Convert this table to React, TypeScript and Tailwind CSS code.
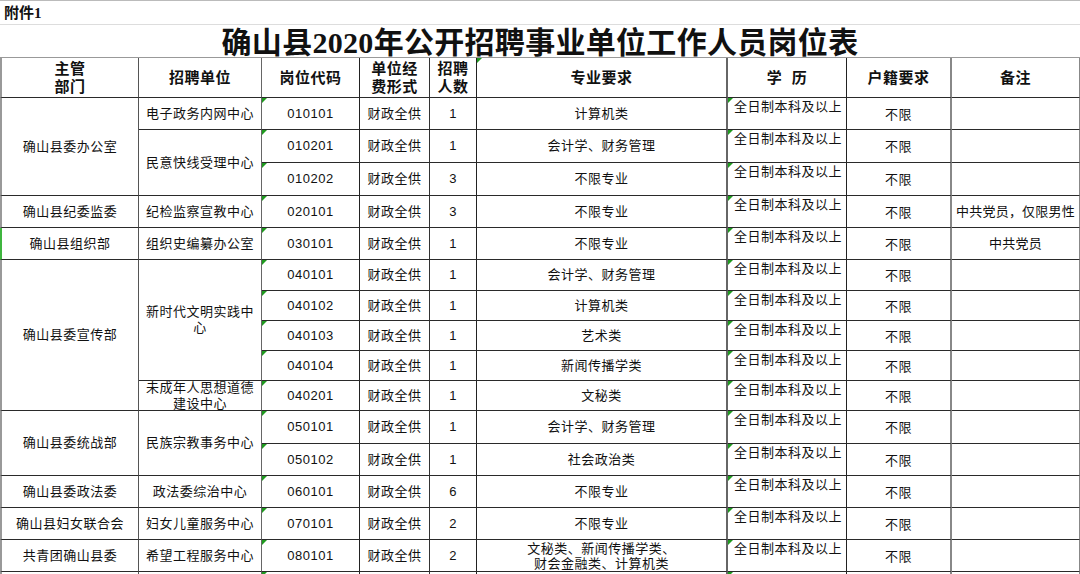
import React from 'react';

const FONT = '"Liberation Sans", "Noto Sans CJK SC", sans-serif';
const TITLE_FONT = '"Liberation Serif", "Noto Sans CJK SC", serif';

// right border + grid column per column
const COL = [
  'col-start-1 border-r border-r-[#555] border-l-2 border-l-[#999]',
  'col-start-2 border-r border-r-[#666]',
  'col-start-3 border-r border-r-[#222]',
  'col-start-4 border-r border-r-[#333]',
  'col-start-5 border-r border-r-[#222]',
  'col-start-6 border-r-2 border-r-[#666]',
  'col-start-7 border-r border-r-[#222]',
  'col-start-8 border-r-2 border-r-[#888]',
  'col-start-9 border-r border-r-[#888]',
];

const SPAN: Record<number, string> = {
  1: '',
  2: 'row-span-2',
  3: 'row-span-3',
  4: 'row-span-4',
  5: 'row-span-5',
};

function Mark() {
  return (
    <span className="absolute left-0 top-0 h-0 w-0 border-t-[5px] border-r-[5px] border-t-[#1f9a1f] border-r-transparent" />
  );
}

function Cell({
  col,
  span = 1,
  children,
  mark,
  className = '',
}: {
  col: number;
  span?: number;
  children?: React.ReactNode;
  mark?: boolean;
  className?: string;
}) {
  return (
    <div
      className={`relative flex items-center justify-center border-b border-b-[#2a2a2a] px-[3px] text-center leading-[16px] ${COL[col]} ${SPAN[span]} ${className}`}
    >
      {mark && <Mark />}
      {children}
    </div>
  );
}

type Row = {
  dept?: [string, number];
  unit?: [string, number];
  code: string;
  num: string;
  major: React.ReactNode;
  note?: string;
  green?: boolean;
};

const rows: Row[] = [
  { dept: ['确山县委办公室', 3], unit: ['电子政务内网中心', 1], code: '010101', num: '1', major: '计算机类' },
  { unit: ['民意快线受理中心', 2], code: '010201', num: '1', major: '会计学、财务管理' },
  { code: '010202', num: '3', major: '不限专业' },
  { dept: ['确山县纪委监委', 1], unit: ['纪检监察宣教中心', 1], code: '020101', num: '3', major: '不限专业', note: '中共党员，仅限男性' },
  { dept: ['确山县组织部', 1], unit: ['组织史编纂办公室', 1], code: '030101', num: '1', major: '不限专业', note: '中共党员', green: true },
  { dept: ['确山县委宣传部', 5], unit: ['新时代文明实践中心', 4], code: '040101', num: '1', major: '会计学、财务管理' },
  { code: '040102', num: '1', major: '计算机类' },
  { code: '040103', num: '1', major: '艺术类' },
  { code: '040104', num: '1', major: '新闻传播学类' },
  { unit: ['未成年人思想道德建设中心', 1], code: '040201', num: '1', major: '文秘类' },
  { dept: ['确山县委统战部', 2], unit: ['民族宗教事务中心', 2], code: '050101', num: '1', major: '会计学、财务管理' },
  { code: '050102', num: '1', major: '社会政治类' },
  { dept: ['确山县委政法委', 1], unit: ['政法委综治中心', 1], code: '060101', num: '6', major: '不限专业' },
  { dept: ['确山县妇女联合会', 1], unit: ['妇女儿童服务中心', 1], code: '070101', num: '2', major: '不限专业' },
  {
    dept: ['共青团确山县委', 1],
    unit: ['希望工程服务中心', 1],
    code: '080101',
    num: '2',
    major: (
      <span className="leading-[15px]">
        文秘类、新闻传播学类、
        <br />
        财会金融类、计算机类
      </span>
    ),
  },
];

export default function App() {
  return (
    <div className="h-[574px] w-[1080px] overflow-hidden bg-white text-[#111]" style={{ fontFamily: FONT }}>
      {/* sheet heading */}
      <div
        className="flex h-[25px] items-center border-y border-t-[#bbb] border-b-[#ddd] pl-[4px] pt-[2px] text-[15px] font-bold"
        style={{ fontFamily: TITLE_FONT }}
      >
        附件1
      </div>
      <div
        className="flex h-[33px] items-end justify-center border-b border-b-[#999] text-[30px] font-bold leading-[29px] tracking-[0.3px]"
        style={{ fontFamily: TITLE_FONT }}
      >
        确山县2020年公开招聘事业单位工作人员岗位表
      </div>

      <div className="grid grid-cols-[139px_123px_98px_70px_47px_251px_119px_105px_128px] grid-rows-[40px_32px_33px_33px_32px_32px_31px_30px_30px_30px_30px_33px_32px_32px_32px_32px_30px] text-[13px] tracking-[0.5px]">
        {/* header */}
        <Cell col={0} className="text-[15px] font-bold leading-[18px]">
          主管
          <br />
          部门
        </Cell>
        <Cell col={1} className="text-[15px] font-bold">
          招聘单位
        </Cell>
        <Cell col={2} className="text-[15px] font-bold">
          岗位代码
        </Cell>
        <Cell col={3} className="text-[15px] font-bold leading-[18px]">
          单位经
          <br />
          费形式
        </Cell>
        <Cell col={4} className="text-[15px] font-bold leading-[18px]">
          招聘
          <br />
          人数
        </Cell>
        <Cell col={5} mark className="text-[15px] font-bold">
          专业要求
        </Cell>
        <Cell col={6} className="text-[15px] font-bold">
          学&nbsp;&nbsp;历
        </Cell>
        <Cell col={7} className="text-[15px] font-bold">
          户籍要求
        </Cell>
        <Cell col={8} className="text-[15px] font-bold">
          备注
        </Cell>

        {rows.map((r) => (
          <React.Fragment key={r.code}>
            {r.dept && (
              <Cell col={0} span={r.dept[1]} className={r.green ? '!border-l-[#3fb53f]' : ''}>
                {r.dept[0]}
              </Cell>
            )}
            {r.unit && (
              <Cell col={1} span={r.unit[1]} className="leading-[14px]">
                {r.unit[0]}
              </Cell>
            )}
            <Cell col={2} mark>
              {r.code}
            </Cell>
            <Cell col={3}>财政全供</Cell>
            <Cell col={4}>{r.num}</Cell>
            <Cell col={5}>{r.major}</Cell>
            <Cell col={6} mark className="!items-start !justify-start pl-[6px] pt-[1px]">
              全日制本科及以上
            </Cell>
            <Cell col={7} className="pt-[2px]">
              不限
            </Cell>
            <Cell col={8} className="!px-0 whitespace-nowrap tracking-[0.2px]">
              {r.note}
            </Cell>
          </React.Fragment>
        ))}

        {/* next row, cut off by the window */}
        <Cell col={0} />
        <Cell col={1} />
        <Cell col={2} mark />
        <Cell col={3} />
        <Cell col={4} />
        <Cell col={5} />
        <Cell col={6} mark />
        <Cell col={7} />
        <Cell col={8} />
      </div>
    </div>
  );
}
